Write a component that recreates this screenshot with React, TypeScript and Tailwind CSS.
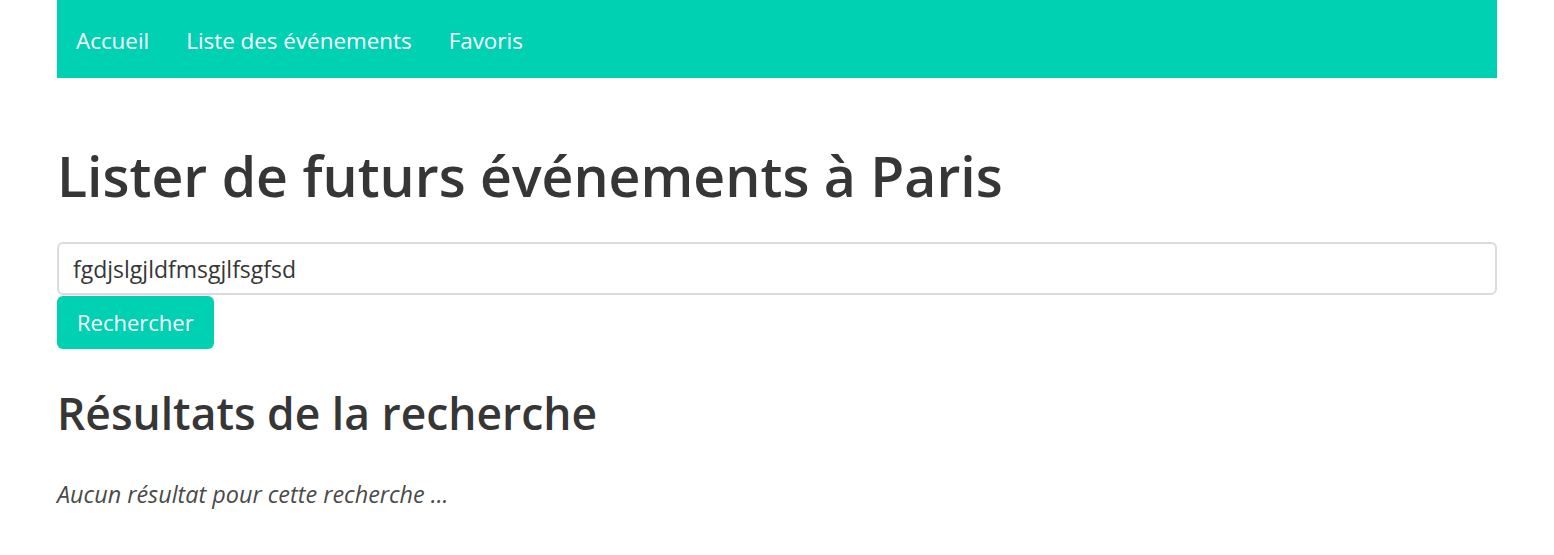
import React, { useState } from "react";

export default function App() {
    const [query, setQuery] = useState("fgdjslgjldfmsgjlfsgfsd");
    const links = ["Accueil", "Liste des événements", "Favoris"];
    return (
        <div className="min-h-[555px] bg-white text-[#363636] font-['Open_Sans',sans-serif]">
            <div className="mx-auto w-[1440px]">
                <nav className="flex h-[78px] items-center gap-[37px] bg-[#00d1b2] px-[19px] pt-[4px]">
                    {links.map((l) => (
                        <a key={l} href="#" className="text-[22.4px] text-white">
                            {l}
                        </a>
                    ))}
                </nav>
                <h1 className="mt-[62px] text-[55.4px] font-semibold leading-[72px]">
                    Lister de futurs événements à Paris
                </h1>
                <form onSubmit={(e) => e.preventDefault()} className="mt-[30px]">
                    <input
                        type="text"
                        value={query}
                        onChange={(e) => setQuery(e.target.value)}
                        className="block h-[53px] w-full rounded-[6px] border-2 border-[#dbdbdb] px-[14px] text-[23px] text-[#363636] outline-none"
                    />
                    <button
                        type="submit"
                        className="mt-[1px] h-[53px] rounded-[6px] bg-[#00d1b2] px-[20px] text-[22px] text-white"
                    >
                        Rechercher
                    </button>
                </form>
                <h2 className="mt-[36px] text-[44.4px] font-semibold leading-[56px]">
                    Résultats de la recherche
                </h2>
                <p className="mt-[36px] text-[23.4px] italic text-[#4a4a4a]">
                    Aucun résultat pour cette recherche ...
                </p>
            </div>
        </div>
    );
}
